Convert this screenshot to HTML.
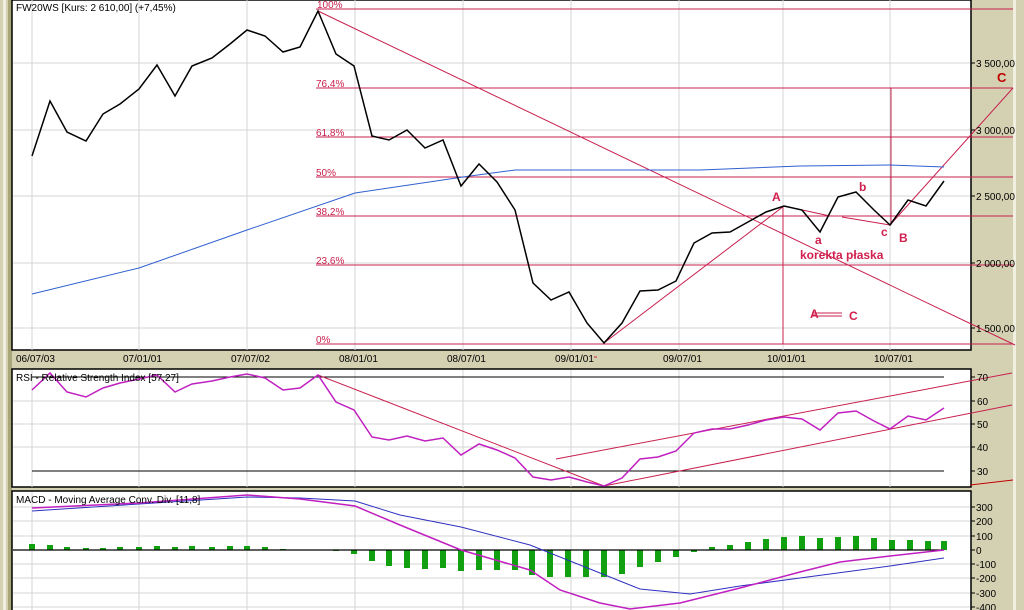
<!DOCTYPE html>
<html><head><meta charset="utf-8"><style>
html,body{margin:0;padding:0;width:1024px;height:610px;overflow:hidden;background:#d4d1b3;}
svg{display:block;font-family:"Liberation Sans",sans-serif;}
</style></head><body>
<svg width="1024" height="610" viewBox="0 0 1024 610" xmlns="http://www.w3.org/2000/svg">
<rect x="0" y="0" width="1024" height="610" fill="#d4d1b3"/>
<rect x="3" y="0" width="3" height="610" fill="#f0efe0"/>
<rect x="8" y="0" width="4" height="610" fill="#a9a67a"/>
<rect x="1013" y="0" width="3" height="610" fill="#f0efe0"/>
<!-- panels -->
<rect x="12" y="0" width="959" height="350" fill="#fff" stroke="#000" stroke-width="1.5"/>
<rect x="12" y="369" width="959" height="118" fill="#fff" stroke="#000" stroke-width="1.5"/>
<rect x="12" y="491" width="959" height="125" fill="#fff" stroke="#000" stroke-width="1.5"/>
<g stroke="#d4d4d4" stroke-width="1">
<path d="M32 0V350M139 0V350M247 0V350M355 0V350M463 0V350M571 0V350M679 0V350M783 0V350M890 0V350"/>
<path d="M13 63H970M13 130H970M13 196H970M13 263H970M13 328H970"/>
<path d="M32 370V487M139 370V487M247 370V487M355 370V487M463 370V487M571 370V487M679 370V487M783 370V487M890 370V487"/>
<path d="M13 401H970M13 424H970M13 447H970"/>
<path d="M32 492V610M139 492V610M247 492V610M355 492V610M463 492V610M571 492V610M679 492V610M783 492V610M890 492V610"/>
<path d="M13 507H970M13 521H970M13 536H970M13 564H970M13 578H970M13 593H970M13 607H970"/>
</g>
<!-- fib lines -->
<g stroke="#c8204e" stroke-width="1" fill="none">
<path d="M316 9H1013M316 88H1013M316 137H1013M316 177H1013M316 216H1013M316 265H1013M316 344H1013"/>
<path d="M318 11L1015 345"/>
<path d="M604 343L784 206"/>
<path d="M784 206L830 216M842 217L890 225"/>
<path d="M890 225L1013 88"/>
<path d="M783 206V344M891 88V225"/>
<path d="M812 313H842M812 316H842"/>
</g>
<g fill="#c8204e" font-size="10">
<text x="317" y="8">100%</text><text x="316" y="87">76,4%</text><text x="316" y="136">61,8%</text>
<text x="316" y="176">50%</text><text x="316" y="215">38,2%</text><text x="316" y="264">23,6%</text><text x="316" y="343">0%</text>
</g>
<g fill="#d0204e" font-size="12" font-weight="bold">
<text x="772" y="201">A</text><text x="815" y="244">a</text><text x="859" y="191">b</text><text x="881" y="236">c</text><text x="899" y="242">B</text>
<text x="800" y="259">korekta płaska</text><text x="810" y="318">A</text><text x="849" y="320">C</text>
</g>
<text x="997" y="82" fill="#c00000" font-size="13" font-weight="bold">C</text>
<!-- MA -->
<polyline fill="none" stroke="#3060d0" stroke-width="1" points="32,294 139,268 247,230 355,193 463,177 515,170 600,170 700,170 800,166 890,165 944,167"/>
<!-- price -->
<polyline fill="none" stroke="#000" stroke-width="1.5" points="32,156 50,101 67,132 86,141 103,114 120,104 139,89 157,65 175,96 192,66 212,58 230,44 247,30 265,36 283,52 300,47 318,11 336,54 354,66 372,136 389,140 407,130 425,148 443,140 461,186 479,164 497,182 515,210 533,283 551,300 569,292 587,323 604,343 622,323 640,291 658,290 676,281 694,243 712,233 730,232 748,222 766,212 784,206 802,210 820,232 838,197 856,192 874,210 890,225 908,200 926,206 944,181"/>
<text x="16" y="11" font-size="10" fill="#000">FW20WS [Kurs: 2 610,00] (+7,45%)</text>
<!-- price axis -->
<g font-size="10" fill="#000">
<path d="M971 63h4M971 130h4M971 196h4M971 263h4M971 328h4" stroke="#000"/>
<text x="976" y="67">3 500,00</text><text x="976" y="134">3 000,00</text><text x="976" y="200">2 500,00</text><text x="976" y="267">2 000,00</text><text x="976" y="332">1 500,00</text>
</g>
<!-- dates -->
<g font-size="10" fill="#000">
<text x="16" y="362">06/07/03</text><text x="123" y="362">07/01/01</text><text x="231" y="362">07/07/02</text><text x="339" y="362">08/01/01</text>
<text x="447" y="362">08/07/01</text><text x="555" y="362">09/01/01</text><text x="663" y="362">09/07/01</text><text x="767" y="362">10/01/01</text><text x="874" y="362">10/07/01</text>
</g>
<path d="M594 357h3" stroke="#c8204e"/>
<!-- RSI -->
<path d="M32 377H944M32 471H944" stroke="#000" stroke-width="1"/>
<g stroke="#c8204e" fill="none"><path d="M318 375L604 486M556 459L1012 373M604 486L1012 405"/></g>
<path d="M970 485L1013 480" stroke="#c00000"/>
<polyline fill="none" stroke="#c020c0" stroke-width="1.5" points="32,390 50,373 67,392 86,397 103,388 120,383 139,379 157,375 175,392 192,384 212,381 230,377 247,374 265,378 283,390 300,388 318,375 336,402 354,410 372,437 389,440 407,436 425,441 443,438 461,455 479,444 497,450 515,458 533,477 551,480 569,477 587,482 604,486 622,478 640,459 658,457 676,451 694,433 712,429 730,429 748,425 766,420 784,417 802,419 820,430 838,413 856,411 874,421 890,429 908,416 926,420 944,408"/>
<text x="16" y="381" font-size="10" fill="#000">RSI - Relative Strength Index [57,27]</text>
<g font-size="10" fill="#000">
<path d="M971 377h4M971 401h4M971 424h4M971 447h4M971 471h4" stroke="#000"/>
<text x="977" y="381">70</text><text x="977" y="405">60</text><text x="977" y="428">50</text><text x="977" y="451">40</text><text x="977" y="475">30</text>
</g>
<!-- MACD -->
<g fill="#10a010">
<rect x="29" y="544" width="6" height="6"/><rect x="47" y="545" width="6" height="5"/><rect x="64" y="547" width="6" height="3"/><rect x="83" y="548" width="6" height="2"/><rect x="100" y="548" width="6" height="2"/><rect x="117" y="547" width="6" height="3"/><rect x="136" y="547" width="6" height="3"/><rect x="154" y="546" width="6" height="4"/><rect x="172" y="547" width="6" height="3"/><rect x="189" y="546" width="6" height="4"/><rect x="209" y="547" width="6" height="3"/><rect x="227" y="546" width="6" height="4"/><rect x="244" y="546" width="6" height="4"/><rect x="262" y="547" width="6" height="3"/><rect x="280" y="549" width="6" height="1"/>
<rect x="333" y="550" width="6" height="1"/><rect x="351" y="550" width="6" height="4"/><rect x="369" y="550" width="6" height="11"/><rect x="386" y="550" width="6" height="16"/><rect x="404" y="550" width="6" height="18"/><rect x="422" y="550" width="6" height="19"/><rect x="440" y="550" width="6" height="18"/><rect x="458" y="550" width="6" height="21"/><rect x="476" y="550" width="6" height="20"/><rect x="494" y="550" width="6" height="20"/><rect x="512" y="550" width="6" height="20"/><rect x="529" y="550" width="6" height="25"/><rect x="547" y="550" width="6" height="27"/><rect x="565" y="550" width="6" height="27"/><rect x="583" y="550" width="6" height="27"/><rect x="601" y="550" width="6" height="27"/><rect x="619" y="550" width="6" height="24"/><rect x="637" y="550" width="6" height="17"/><rect x="655" y="550" width="6" height="12"/><rect x="673" y="550" width="6" height="7"/><rect x="691" y="550" width="6" height="2"/>
<rect x="709" y="547" width="6" height="3"/><rect x="727" y="545" width="6" height="5"/><rect x="745" y="542" width="6" height="8"/><rect x="763" y="539" width="6" height="11"/><rect x="781" y="537" width="6" height="13"/><rect x="799" y="536" width="6" height="14"/><rect x="817" y="538" width="6" height="12"/><rect x="835" y="537" width="6" height="13"/><rect x="853" y="536" width="6" height="14"/><rect x="871" y="538" width="6" height="12"/><rect x="889" y="540" width="6" height="10"/><rect x="907" y="540" width="6" height="10"/><rect x="925" y="541" width="6" height="9"/><rect x="941" y="541" width="6" height="9"/>
</g>
<path d="M13 550H944" stroke="#000" stroke-width="1.2"/>
<polyline fill="none" stroke="#3030c0" stroke-width="1" points="32,511 139,504 247,497 300,498 355,501 400,515 461,527 530,545 580,565 640,589 690,594 740,586 800,578 890,566 944,558"/>
<polyline fill="none" stroke="#c020c0" stroke-width="1.5" points="32,508 139,503 247,495 300,499 355,506 400,525 461,550 530,570 560,590 600,603 630,609 680,603 740,588 800,572 840,562 890,556 944,550"/>
<text x="16" y="503" font-size="10" fill="#000">MACD - Moving Average Conv. Div. [11,8]</text>
<g font-size="10" fill="#000">
<path d="M971 507h4M971 521h4M971 536h4M971 550h4M971 564h4M971 578h4M971 593h4M971 607h4" stroke="#000"/>
<text x="976" y="511">300</text><text x="976" y="525">200</text><text x="976" y="540">100</text><text x="976" y="554">0</text>
<text x="976" y="568">-100</text><text x="976" y="582">-200</text><text x="976" y="597">-300</text><text x="976" y="611">-400</text>
</g>
</svg>
</body></html>
